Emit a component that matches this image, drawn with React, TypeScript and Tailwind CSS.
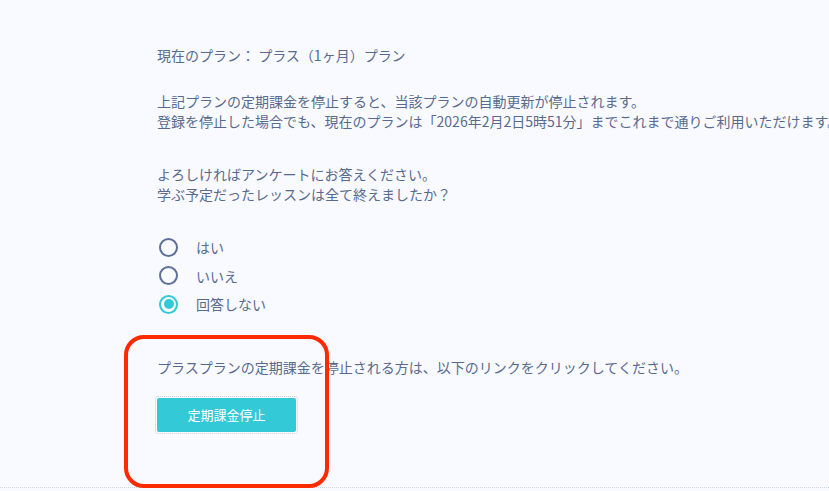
import { useState } from "react";

const OPTIONS = ["はい", "いいえ", "回答しない"];

export default function App() {
  const [answer, setAnswer] = useState("回答しない");

  return (
    <div
      className="relative w-[829px] h-[491px] overflow-hidden bg-[#f8faff] text-[#586a8e] text-[14px] leading-[20px]"
      style={{ fontFamily: '"Noto Sans CJK JP", "Noto Sans", sans-serif' }}
    >
      <div className="pl-[157px] pt-[45px] whitespace-nowrap">
        <p>現在のプラン： プラス（1ヶ月）プラン</p>

        <div className="mt-[26px]">
          <p>上記プランの定期課金を停止すると、当該プランの自動更新が停止されます。</p>
          <p>登録を停止した場合でも、現在のプランは「2026年2月2日5時51分」までこれまで通りご利用いただけます。</p>
        </div>

        <div className="mt-[33px]">
          <p>よろしければアンケートにお答えください。</p>
          <p>学ぶ予定だったレッスンは全て終えましたか？</p>
        </div>

        <div className="mt-[29px] flex flex-col">
          {OPTIONS.map((opt) => {
            const checked = answer === opt;
            return (
              <label key={opt} className="h-[28.5px] flex items-center gap-[18px] cursor-pointer">
                <span
                  onClick={() => setAnswer(opt)}
                  className={
                    checked
                      ? "ml-[2px] w-[19px] h-[19px] rounded-full border-2 border-[#33c9d6] flex items-center justify-center"
                      : "ml-[2px] w-[19px] h-[19px] rounded-full border-2 border-[#5d7099]"
                  }
                >
                  {checked && <span className="w-[10px] h-[10px] rounded-full bg-[#33c9d6]" />}
                </span>
                <span onClick={() => setAnswer(opt)}>{opt}</span>
              </label>
            );
          })}
        </div>

        <p className="mt-[38px]">プラスプランの定期課金を停止される方は、以下のリンクをクリックしてください。</p>

        <div className="mt-[19px] -ml-[2px] inline-block p-[1px] border border-dotted border-[#c9d2de] rounded-[3px]">
          <button className="w-[139px] h-[34px] rounded-[2px] bg-[#33c9d6] text-white text-[13px]">
            定期課金停止
          </button>
        </div>
      </div>

      <div className="absolute left-0 right-0 top-[487px] border-t border-dotted border-[#cdd5e0]" />

      <div className="absolute left-[124px] top-[335px] w-[205px] h-[153px] border-[4px] border-[#ff2a00] rounded-[20px]" />
    </div>
  );
}
